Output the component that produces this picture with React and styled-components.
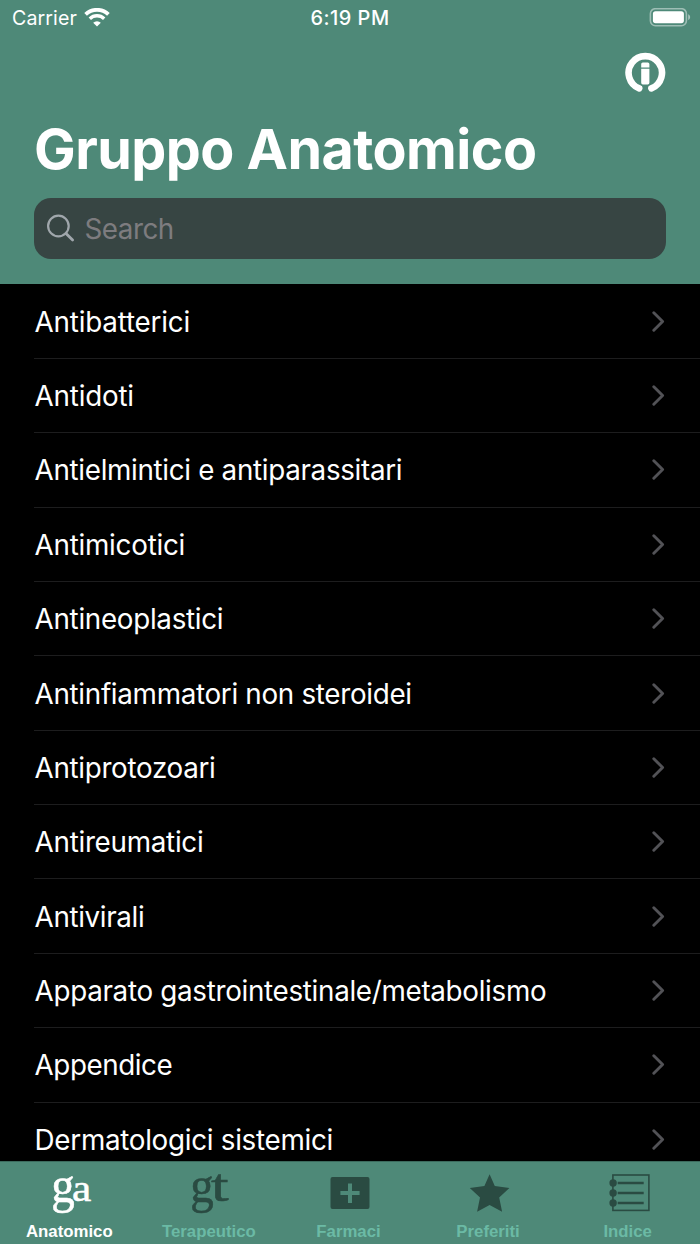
import React from 'react';
import styled, { createGlobalStyle } from 'styled-components';

const GlobalStyle = createGlobalStyle`
  * {
    box-sizing: border-box;
  }
  body {
    margin: 0;
    background: #000;
    font-family: Inter, "Liberation Sans", sans-serif;
  }
`;

const Screen = styled.div`
  display: flex;
  flex-direction: column;
  width: 700px;
  height: 1244px;
  overflow: hidden;
  background: #000;
  color: #fff;
`;

const Header = styled.header`
  flex: none;
  height: 284px;
  background: #4e8978;
`;

const StatusBar = styled.div`
  display: grid;
  grid-template-columns: 1fr auto 1fr;
  align-items: center;
  height: 36px;
  padding: 0 9px 0 12px;
`;

const Carrier = styled.div`
  display: flex;
  align-items: center;
  gap: 7px;
  font-size: 19.6px;
  line-height: 36px;
  letter-spacing: 0.1px;
`;

const Clock = styled.div`
  padding-right: 3px;
  font-size: 19.9px;
  font-weight: 500;
  line-height: 36px;
  letter-spacing: 0.5px;
`;

const Battery = styled.svg`
  justify-self: end;
`;

const NavBar = styled.div`
  display: flex;
  justify-content: flex-end;
  height: 74px;
  padding: 15.5px 34px 0 0;
`;

const Title = styled.h1`
  margin: 0;
  padding-left: 34px;
  height: 88px;
  font-size: 55.6px;
  font-weight: 700;
  line-height: 77px;
  letter-spacing: -0.55px;
  white-space: nowrap;
`;

const SearchBar = styled.div`
  display: flex;
  align-items: center;
  gap: 8.5px;
  height: 61px;
  margin: 0 34px;
  padding-left: 12px;
  border-radius: 17px;
  background: #374543;
  color: #7d7c7f;
  font-size: 27.8px;
  letter-spacing: -0.5px;
`;

const List = styled.ul`
  flex: 1;
  min-height: 0;
  margin: 0;
  padding: 0.6px 0 0 34px;
  overflow: hidden;
  list-style: none;
`;

const Row = styled.li`
  display: flex;
  align-items: center;
  justify-content: space-between;
  height: 74.36px;
  padding: 1px 35px 0 0.6px;
  border-bottom: 1px solid #1d1d1e;
  font-size: 27.8px;
  letter-spacing: ${(p) => p.$tracking}px;
  white-space: nowrap;
`;

const TabBar = styled.nav`
  display: grid;
  grid-template-columns: repeat(5, 139.6px);
  flex: none;
  height: 83px;
  border-top: 1px solid #3c6a5d;
  background: #4e8978;
`;

const Tab = styled.div`
  display: flex;
  flex-direction: column;
  align-items: center;
  color: ${(p) => (p.$active ? '#fff' : '#2a4b42')};
`;

const TabIcon = styled.svg`
  flex: none;
  margin-left: 2px;
  overflow: visible;
`;

const TabLabel = styled.span`
  margin: 2px 1px 0 0;
  font-family: "Liberation Sans", Arial, sans-serif;
  font-size: 16.8px;
  font-weight: 700;
  line-height: 20px;
  color: ${(p) => (p.$active ? '#fff' : '#6bbaa5')};
`;

const Monogram = styled.text`
  font-family: "Liberation Serif", "Times New Roman", serif;
  fill: currentColor;
  stroke: currentColor;
  stroke-width: 0.5px;
`;

const rows = [
  { name: 'Antibatterici', tracking: -0.2 },
  { name: 'Antidoti', tracking: -0.22 },
  { name: 'Antielmintici e antiparassitari', tracking: -0.32 },
  { name: 'Antimicotici', tracking: -0.25 },
  { name: 'Antineoplastici', tracking: -0.3 },
  { name: 'Antinfiammatori non steroidei', tracking: -0.31 },
  { name: 'Antiprotozoari', tracking: -0.32 },
  { name: 'Antireumatici', tracking: -0.28 },
  { name: 'Antivirali', tracking: -0.36 },
  { name: 'Apparato gastrointestinale/metabolismo', tracking: -0.31 },
  { name: 'Appendice', tracking: -0.45 },
  { name: 'Dermatologici sistemici', tracking: -0.29 },
];

function WifiIcon() {
  return (
    <svg width="26" height="20" viewBox="0 0 26 20" fill="none" stroke="#fff">
      <path d="M1.6 6.4A16.4 16.4 0 0 1 24.4 6.4" strokeWidth="3.8" />
      <path d="M5.8 10.7A10.4 10.4 0 0 1 20.2 10.7" strokeWidth="3.4" />
      <path d="M13 18.5L9.2 14.7A5.4 5.4 0 0 1 16.8 14.7Z" fill="#fff" stroke="none" />
    </svg>
  );
}

function BatteryIcon() {
  return (
    <Battery width="42" height="20" viewBox="0 0 42 20">
      <rect x="1.4" y="0.7" width="36" height="17" rx="5" fill="none" stroke="#fff" strokeOpacity=".45" strokeWidth="1.6" />
      <rect x="3.9" y="3.2" width="31" height="12" rx="2.6" fill="#fff" />
      <path d="M39.2 6.3C41.8 7.3 41.8 11.1 39.2 12.1Z" fill="#fff" fillOpacity=".5" />
    </Battery>
  );
}

function InfoIcon() {
  return (
    <svg width="42" height="42" viewBox="0 0 42 42">
      <path d="M15.2 36.4A16.7 16.7 0 1 1 27.4 36.4" fill="none" stroke="#fff" strokeWidth="6.6" strokeLinecap="round" />
      <path d="M18.8 10.4h5a1.6 1.6 0 0 1 1.6 1.6v3.6h-8.2v-3.6a1.6 1.6 0 0 1 1.6-1.6zM17.2 16.8h8.2v14a1.6 1.6 0 0 1-1.6 1.6h-5a1.6 1.6 0 0 1-1.6-1.6z" fill="#fff" />
    </svg>
  );
}

function SearchIcon() {
  return (
    <svg width="30" height="30" viewBox="0 0 30 30" fill="none" stroke="#a0a7ac" strokeLinecap="round">
      <circle cx="12.4" cy="12" r="10.3" strokeWidth="2.2" />
      <path d="M20 19.4L26.6 26" strokeWidth="2.8" />
    </svg>
  );
}

function Chevron() {
  return (
    <svg width="14" height="22" viewBox="0 0 14 22" fill="none" stroke="#525256" strokeWidth="2.9" strokeLinecap="round" strokeLinejoin="round">
      <path d="M2.8 1.8L11.6 10.5L2.8 19.2" />
    </svg>
  );
}

function AnatomicoIcon() {
  return (
    <>
      <Monogram transform="translate(2.2 40) scale(.94 1)" fontSize="50">g</Monogram>
      <Monogram transform="translate(22.9 38.5) scale(1.14 1)" fontSize="38">a</Monogram>
    </>
  );
}

function TerapeuticoIcon() {
  return (
    <>
      <Monogram transform="translate(2.2 40) scale(.94 1)" fontSize="50">g</Monogram>
      <Monogram transform="translate(22.9 38.5) scale(1.35 1)" fontSize="47">t</Monogram>
    </>
  );
}

function FarmaciIcon() {
  return (
    <path
      fill="currentColor"
      fillRule="evenodd"
      d="M4.5 15h35a2 2 0 0 1 2 2v28a2 2 0 0 1-2 2h-35a2 2 0 0 1-2-2v-28a2 2 0 0 1 2-2zM20 21.5v7.6h-7.6v4h7.6v7.8h4v-7.8h7.6v-4h-7.6v-7.6z"
    />
  );
}

function PreferitiIcon() {
  return (
    <path fill="currentColor" d="M21.6 12.2L26.8 24L41.4 26L31.2 35.5L34.1 49.8L21.6 43L9.1 49.8L12 35.5L1.8 26L16.4 24Z" />
  );
}

function IndiceIcon() {
  return (
    <g transform="translate(.7 0)" fill="none" stroke="currentColor">
      <rect x="5.2" y="13" width="36" height="35.4" strokeWidth="1.6" />
      <path d="M10 21H36M10 31H36M10 41H36" strokeWidth="2.6" />
      <g fill="currentColor" stroke="none">
        <circle cx="5.4" cy="21" r="3.7" />
        <circle cx="5.4" cy="31" r="3.7" />
        <circle cx="5.4" cy="41" r="3.7" />
      </g>
    </g>
  );
}

const tabs = [
  { label: 'Anatomico', Icon: AnatomicoIcon, active: true },
  { label: 'Terapeutico', Icon: TerapeuticoIcon },
  { label: 'Farmaci', Icon: FarmaciIcon },
  { label: 'Preferiti', Icon: PreferitiIcon },
  { label: 'Indice', Icon: IndiceIcon },
];

function App() {
  return (
    <Screen>
      <GlobalStyle />
      <Header>
        <StatusBar>
          <Carrier>
            Carrier
            <WifiIcon />
          </Carrier>
          <Clock>6:19 PM</Clock>
          <BatteryIcon />
        </StatusBar>
        <NavBar>
          <InfoIcon />
        </NavBar>
        <Title>Gruppo Anatomico</Title>
        <SearchBar>
          <SearchIcon />
          Search
        </SearchBar>
      </Header>
      <List>
        {rows.map((row) => (
          <Row key={row.name} $tracking={row.tracking}>
            {row.name}
            <Chevron />
          </Row>
        ))}
      </List>
      <TabBar>
        {tabs.map(({ label, Icon, active }) => (
          <Tab key={label} $active={active}>
            <TabIcon width="44" height="58" viewBox="0 0 44 58">
              <Icon />
            </TabIcon>
            <TabLabel $active={active}>{label}</TabLabel>
          </Tab>
        ))}
      </TabBar>
    </Screen>
  );
}

export default App;
